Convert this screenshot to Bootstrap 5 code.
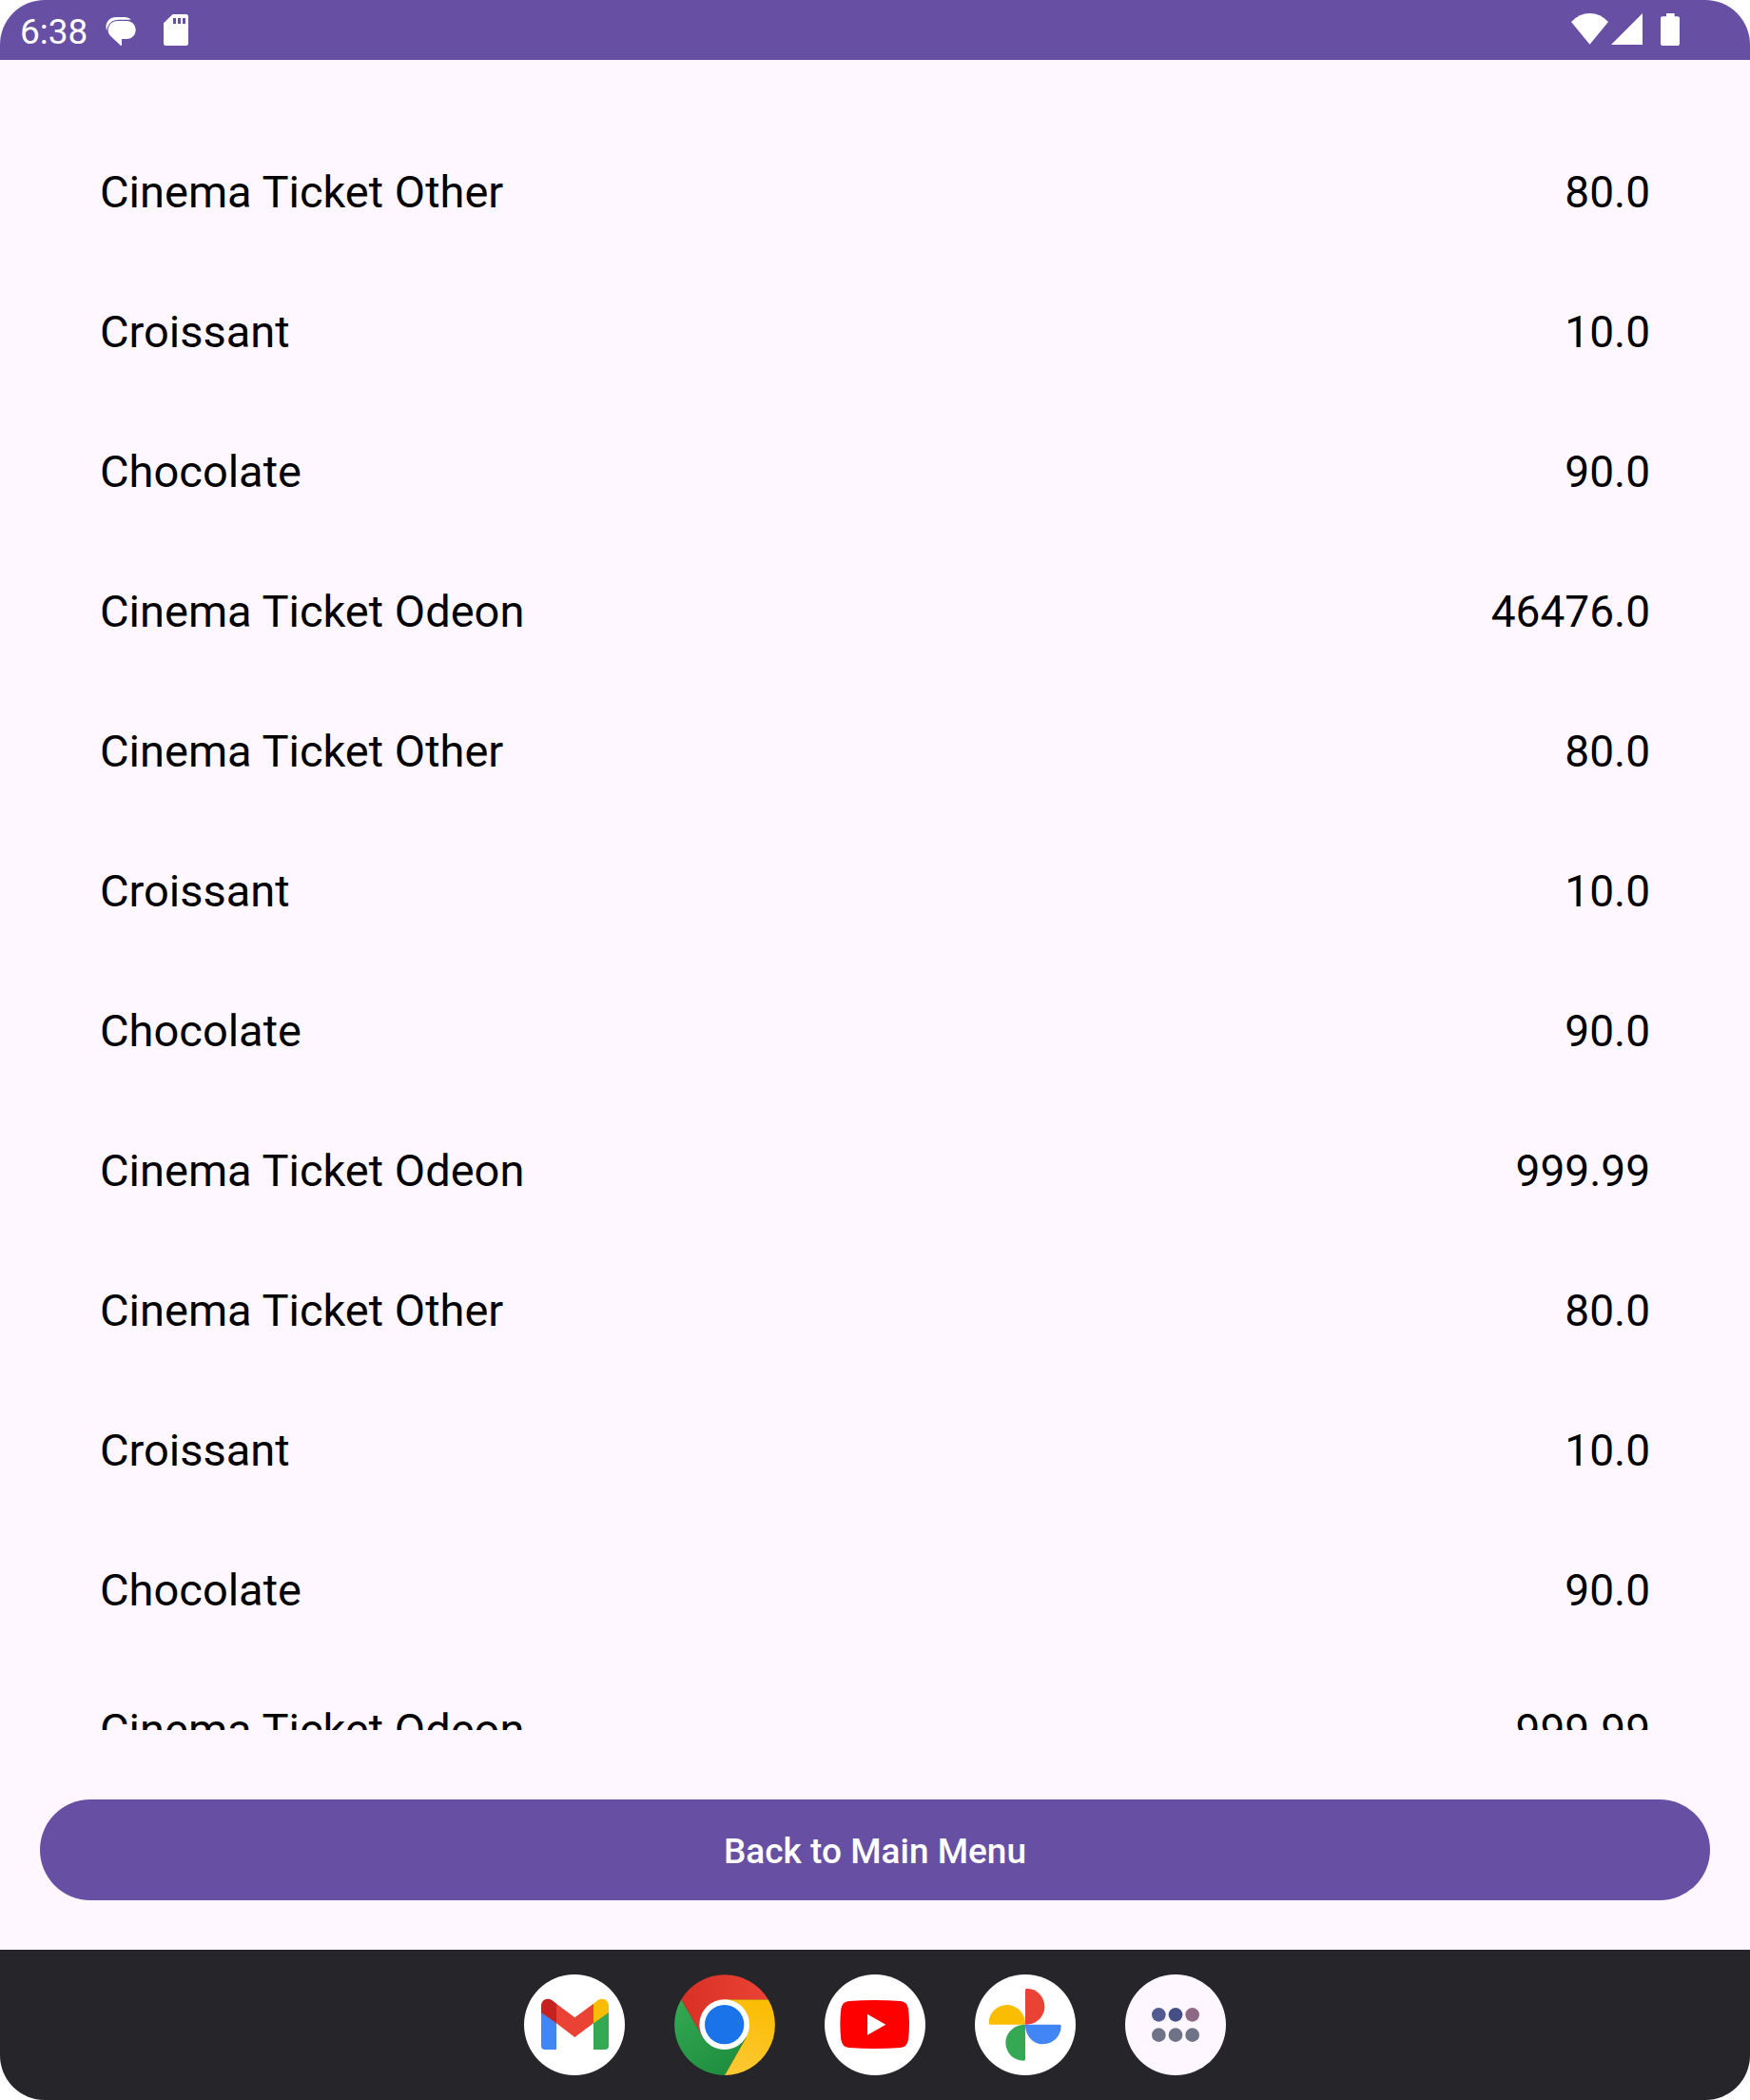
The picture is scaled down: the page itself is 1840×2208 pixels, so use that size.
<!DOCTYPE html>
<html lang="en">
<head>
<meta charset="utf-8">
<meta name="viewport" content="width=device-width, initial-scale=1">
<title>Items</title>
<link rel="stylesheet" href="https://cdn.jsdelivr.net/npm/bootstrap@5.3.0/dist/css/bootstrap.min.css">
<style>
  :root { --brand: #6750a4; --surface: #fef7ff; --dock: #26252a; }
  body { background: #fff; font-family: Roboto, "Noto Sans", sans-serif; }
  .device { background: var(--surface); border-radius: 47px; }
  .status-bar { background: var(--brand); height: 63px; padding: 0 74px 0 21px; }
  .clock { font-size: 37px; line-height: 63px; padding-top: 3px; width: 90px; }
  .status-bar svg, .dock svg { display: block; flex: none; }
  .notices { gap: 29px; }
  .signals { gap: 3px; }
  .signals .battery { margin-left: 16px; }
  .content { padding: 65px 42px 52px; gap: 73px; min-height: 0; }
  .items { --bs-list-group-bg: transparent; min-height: 0; flex: 1 1 0; }
  .items .list-group-item { flex: none; height: 147px; padding: 0 63px; border: 0; color: #000; font-size: 47px; line-height: 56px; }
  .items .price { font-size: 46px; }
  .btn-main { --bs-btn-color: #fff; --bs-btn-bg: var(--brand); --bs-btn-hover-color: #fff; --bs-btn-hover-bg: #5b4696; --bs-btn-active-color: #fff; --bs-btn-active-bg: #503d86;
    height: 106px; padding: 4px 12px 0; font-size: 37px; line-height: 44px; font-weight: 500; border: 0; }
  .dock { background: var(--dock); padding: 26px 0; gap: 52px; }
</style>
</head>
<body>
<div class="device d-flex flex-column vh-100 overflow-hidden">
  <header class="status-bar d-flex justify-content-between align-items-center text-white flex-shrink-0">
    <div class="d-flex align-items-center">
      <time class="clock">6:38</time>
      <div class="notices d-flex">
        <svg width="32" height="63" viewBox="333 0 96 189" role="img" aria-label="Message">
          <path d="M337 97C328 76 343 54 366 54H392Q406 54 413 62H376C353 62 338 76 337 97Z" fill="#fff"/>
          <path d="M371 66H399C417 66 428 79 428 94C428 110 417 123 399 123H384V144H381L350 115C344 109 341 103 341 95C341 79 354 66 371 66Z" fill="#fff"/>
        </svg>
        <svg width="26" height="63" viewBox="516 0 78 189" role="img" aria-label="SD card">
          <path d="M516 73L545 45H587Q594 45 594 52V137Q594 144 587 144H523Q516 144 516 137Z" fill="#fff"/>
          <path d="M546 57h9v18h-9zM561 57h9v18h-9zM576 57h9v18h-9z" fill="#6750a4"/>
        </svg>
      </div>
    </div>
    <div class="signals d-flex">
      <svg width="39" height="63" viewBox="96 0 117 189" role="img" aria-label="Wi-Fi"><path d="M96 69Q121 42 154.500 42T213 69L154.500 140Z" fill="#fff"/></svg>
      <svg width="33" height="63" viewBox="222 0 99 189" role="img" aria-label="Signal"><path d="M321 42V141H222Z" fill="#fff"/></svg>
      <svg class="battery" width="20" height="63" viewBox="378 0 60 189" role="img" aria-label="Battery"><path d="M396 42H422V52H432Q438 52 438 58V138Q438 144 432 144H384Q378 144 378 138V58Q378 52 384 52H396Z" fill="#fff"/></svg>
    </div>
  </header>

  <main class="content d-flex flex-column flex-grow-1">
    <ul class="items list-group list-group-flush overflow-hidden">
      <li class="list-group-item d-flex justify-content-between align-items-center"><span>Cinema Ticket Other</span><span class="price">80.0</span></li>
      <li class="list-group-item d-flex justify-content-between align-items-center"><span>Croissant</span><span class="price">10.0</span></li>
      <li class="list-group-item d-flex justify-content-between align-items-center"><span>Chocolate</span><span class="price">90.0</span></li>
      <li class="list-group-item d-flex justify-content-between align-items-center"><span>Cinema Ticket Odeon</span><span class="price">46476.0</span></li>
      <li class="list-group-item d-flex justify-content-between align-items-center"><span>Cinema Ticket Other</span><span class="price">80.0</span></li>
      <li class="list-group-item d-flex justify-content-between align-items-center"><span>Croissant</span><span class="price">10.0</span></li>
      <li class="list-group-item d-flex justify-content-between align-items-center"><span>Chocolate</span><span class="price">90.0</span></li>
      <li class="list-group-item d-flex justify-content-between align-items-center"><span>Cinema Ticket Odeon</span><span class="price">999.99</span></li>
      <li class="list-group-item d-flex justify-content-between align-items-center"><span>Cinema Ticket Other</span><span class="price">80.0</span></li>
      <li class="list-group-item d-flex justify-content-between align-items-center"><span>Croissant</span><span class="price">10.0</span></li>
      <li class="list-group-item d-flex justify-content-between align-items-center"><span>Chocolate</span><span class="price">90.0</span></li>
      <li class="list-group-item d-flex justify-content-between align-items-center"><span>Cinema Ticket Odeon</span><span class="price">999.99</span></li>
    </ul>
    <button type="button" class="btn btn-main rounded-pill w-100 flex-shrink-0">Back to Main Menu</button>
  </main>

  <nav class="dock d-flex justify-content-center flex-shrink-0" aria-label="Apps">
    <a href="#" aria-label="Gmail">
      <svg width="106" height="106" viewBox="63 108 318 318">
        <circle cx="222" cy="267" r="159" fill="#fff"/>
        <path d="M117 226L165 260V345H129Q117 345 117 333Z" fill="#4285f4"/>
        <path d="M330 226L282 260V345H318Q330 345 330 333Z" fill="#34a853"/>
        <path d="M165 200L223 244L282 200V262L223 306L165 262Z" fill="#ea4335"/>
        <path d="M117 228V208C117 187 137 179 154 191L165 200V262Z" fill="#c5221f"/>
        <path d="M330 228V208C330 187 310 179 293 191L282 200V262Z" fill="#fbbc04"/>
      </svg>
    </a>
    <a href="#" aria-label="Chrome">
      <svg width="106" height="106" viewBox="537 108 318 318">
        <defs>
          <linearGradient id="cr"><stop offset="0" stop-color="#d93025"/><stop offset="1" stop-color="#ea4335"/></linearGradient>
          <linearGradient id="cg" x1=".7" y1="1" x2=".1" y2="0"><stop offset="0" stop-color="#1e8e3e"/><stop offset="1" stop-color="#34a853"/></linearGradient>
          <linearGradient id="cy" x1=".3" y1="1" x2=".6" y2="0"><stop offset="0" stop-color="#fcc934"/><stop offset="1" stop-color="#fbbc04"/></linearGradient>
        </defs>
        <path d="M559 187A159 159 0 0 0 696 426L764 307L696 267L628 307Z" fill="url(#cg)"/>
        <path d="M833 187A159 159 0 0 1 696 426L764 307L696 267V187Z" fill="url(#cy)"/>
        <path d="M559 187A159 159 0 0 1 833 187H696V267L628 307Z" fill="url(#cr)"/>
        <circle cx="695" cy="266" r="79" fill="#fff"/>
        <circle cx="695" cy="266" r="62" fill="#1a73e8"/>
      </svg>
    </a>
    <a href="#" aria-label="YouTube">
      <svg width="106" height="106" viewBox="51 108 318 318">
        <circle cx="210" cy="267" r="159" fill="#fff"/>
        <path d="M128 192Q209 186 290 192Q311 194 315 216Q321 265 315 314Q311 337 290 339Q209 345 128 339Q107 337 103 314Q97 265 103 216Q107 194 128 192Z" fill="#f00"/>
        <path d="M186 233L244 266L186 299Z" fill="#fff"/>
      </svg>
    </a>
    <a href="#" aria-label="Photos">
      <svg width="106" height="106" viewBox="525 108 318 318">
        <circle cx="684" cy="267" r="159" fill="#fff"/>
        <path d="M684 266V157Q684 152 689 152C720 152 745 178 745 209S720 266 684 266Z" fill="#ea4335"/>
        <path d="M684 266H574Q569 266 569 261C569 229 595 204 626 204S684 230 684 266Z" fill="#fbbc04"/>
        <path d="M684 266V375Q684 380 679 380C647 380 622 354 622 323S648 266 684 266Z" fill="#34a853"/>
        <path d="M684 266H792Q797 266 797 271C797 303 771 328 740 328S684 302 684 266Z" fill="#4285f4"/>
      </svg>
    </a>
    <a href="#" aria-label="All apps">
      <svg width="106" height="106" viewBox="69 108 318 318">
        <circle cx="228" cy="267" r="159" fill="#fef7ff"/>
        <circle cx="175" cy="235" r="22" fill="#515b92"/>
        <circle cx="228" cy="235" r="22" fill="#444f88"/>
        <circle cx="281" cy="235" r="22" fill="#8e6984"/>
        <g fill="#6f7388"><circle cx="175" cy="299" r="22"/><circle cx="228" cy="299" r="22"/><circle cx="281" cy="299" r="22"/></g>
      </svg>
    </a>
  </nav>
</div>
<script src="https://cdn.jsdelivr.net/npm/bootstrap@5.3.0/dist/js/bootstrap.bundle.min.js"></script>
</body>
</html>
